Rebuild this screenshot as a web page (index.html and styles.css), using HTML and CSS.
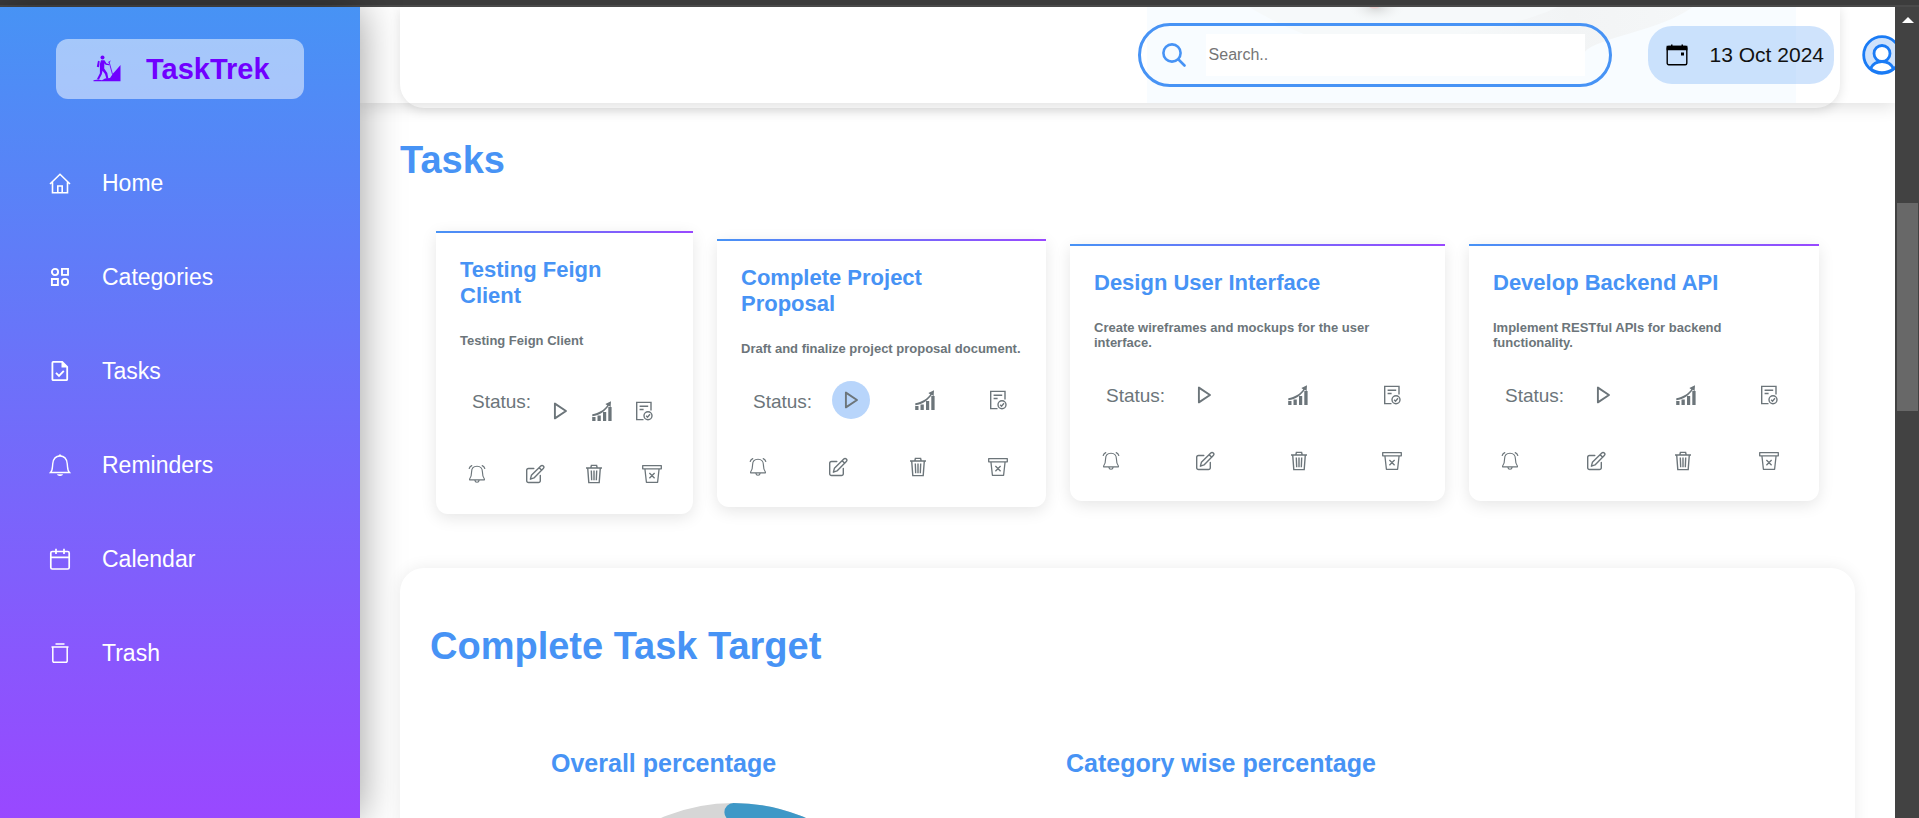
FILE: index.html
```html
<!DOCTYPE html>
<html lang="en">
<head>
<meta charset="utf-8">
<title>TaskTrek</title>
<link rel="stylesheet" href="styles.css">
</head>
<body>
<svg class="sprite" aria-hidden="true">
  <symbol id="i-play" viewBox="0 0 20 20"><path d="M4.900 2.600v14.800L16 10z" fill="none" stroke="currentColor" stroke-width="1.900" stroke-linejoin="round"/></symbol>
  <symbol id="i-chart" viewBox="0 0 20 20"><g fill="currentColor"><path d="M.2 16h3.300v4H.2zM5.500 14.500h3.300V20H5.500zM11 11h3.200v9H11zM16.300 6h3.300v14h-3.300z"/><path d="M.3 13.200C7 12.200 12 9 15.300 4.600L13.400 3 19 .3l-.4 6-1.700-1.500C13 10.300 8 14.200.3 15.300z"/></g></symbol>
  <symbol id="i-doc" viewBox="0 0 20 20"><g fill="none" stroke="currentColor" stroke-width="1.400"><path d="M9.500 18.600H2.700V1.400H17v8.200M5.600 5.300h8.600M5.600 8.500h4"/><circle cx="14" cy="14.700" r="4"/><path d="m12.200 14.800 1.300 1.400 2.500-3"/></g></symbol>
  <symbol id="i-alarm" viewBox="0 0 20 20"><g fill="none" stroke="currentColor" stroke-width="1.150" stroke-linecap="round" stroke-linejoin="round"><path d="M10 2.200c-3.600 0-5.400 2.400-5.400 5.600 0 4-.8 5.700-2 7.200v.8h14.800V15c-1.200-1.500-2-3.200-2-7.200 0-3.200-1.800-5.600-5.400-5.600zM7.800 16.200c.4 2.700 4 2.700 4.400 0M2.200 4.500c.4-1.400 1.300-2.400 2.600-2.900M17.800 4.500c-.4-1.400-1.300-2.400-2.600-2.900"/></g></symbol>
  <symbol id="i-edit" viewBox="0 0 20 20"><g fill="none" stroke="currentColor" stroke-width="1.400" stroke-linecap="round" stroke-linejoin="round"><path d="M8.800 4.500H3.500A1.800 1.800 0 0 0 1.700 6.300v10.400a1.800 1.800 0 0 0 1.800 1.800h10a1.800 1.800 0 0 0 1.800-1.800V11.500"/><path d="m5.400 15.200 1-3.900L15.800 2a1.700 1.700 0 0 1 2.500 2.500L9 13.900zM14.200 3.700l2.500 2.500"/></g></symbol>
  <symbol id="i-bin" viewBox="0 0 20 20"><g fill="none" stroke="currentColor" stroke-width="1.400"><path d="M2 4h16M6.800 4l.6-2.600h5.200l.6 2.600M3.700 4l1.100 14.600h10.400L16.300 4M7.300 6.500l.4 9.800M10 6.500v9.800M12.700 6.500l-.4 9.800"/></g></symbol>
  <symbol id="i-archive" viewBox="0 0 20 20"><g fill="none" stroke="currentColor" stroke-width="1.300" stroke-linejoin="round"><path d="M.7 1.600h18.600v3.200H.7zM2.900 4.800l1.500 13.500h11.200l1.500-13.500M7.400 9l5.200 5.200M12.600 9l-5.200 5.200"/></g></symbol>
</svg>

<div class="window-edge"></div>
<div class="shell">
  <aside class="sidebar">
    <div class="brand">
      <svg class="brand-icon" viewBox="0 0 28 28" aria-hidden="true"><g fill="#7000ff"><circle cx="9.500" cy="2.500" r="2"/><path d="M8 5.200 11.500 5.300 13.500 8.400 16.300 9 16 10.300 12.600 9.700 11.400 8.200 11.200 13.600 14.300 18 15.300 23.500 13.500 24 12 19 9.500 15.800 8.800 19.200 6 24.600 4 24 6.900 18.300 6.900 9zM5 5.800 6.700 6.200 6 12.300 3.800 11.800z"/><path d="M.5 25.200 5 24.500 9 25.200 12 23.400 17 23 20 18.600 23 15.200 27.500 10V26.200H.5z"/></g><path d="M16 6.500 19.500 19.500M15.500 7.500l2-1.500" stroke="#7000ff" stroke-width=".9" fill="none"/></svg>
      <span>TaskTrek</span>
    </div>
    <nav class="nav" aria-label="Main">
      <a class="nav-link" href="#home"><svg viewBox="0 0 22 22" aria-hidden="true"><path d="M1 12 11 2.300 21 12M3.500 10.300v10.400h15V10.300M8.800 20.500v-6.500h4.400v6.500" fill="none" stroke="#fff" stroke-width="1.600"/></svg>Home</a>
      <a class="nav-link" href="#categories"><svg viewBox="0 0 22 22" aria-hidden="true"><g fill="none" stroke="#fff" stroke-width="1.900"><circle cx="6" cy="6" r="3.100"/><path d="M13 2.900h6v6h-6zM2.900 13h6v6h-6z"/><circle cx="16" cy="16" r="3.100"/></g></svg>Categories</a>
      <a class="nav-link" href="#tasks"><svg viewBox="0 0 22 22" aria-hidden="true"><path d="M4.200 1.900h9l5 5v12.400a.8.800 0 0 1-.8.800H4.200a.8.800 0 0 1-.8-.8V2.700a.8.800 0 0 1 .8-.8z" fill="none" stroke="#fff" stroke-width="1.800"/><path d="M12.500 1.500v6h6z" fill="#fff"/><path d="m7 12.800 3 3 4.800-4.900" fill="none" stroke="#fff" stroke-width="1.900"/></svg>Tasks</a>
      <a class="nav-link" href="#reminders"><svg viewBox="0 0 22 22" aria-hidden="true"><path d="M1.500 18.500h19c-2.200-2-1.700-4.500-2.300-9C17.700 5 15 2 11 2S4.300 5 3.800 9.500c-.6 4.500-.1 7-2.300 9z" fill="none" stroke="#fff" stroke-width="1.400"/><path d="M8 20.300h6c-.8 2.300-5.200 2.300-6 0zM9.200 2h3.600L11 0z" fill="#fff"/></svg>Reminders</a>
      <a class="nav-link" href="#calendar"><svg viewBox="0 0 22 22" aria-hidden="true"><g fill="none" stroke="#fff" stroke-width="1.700"><rect x="1.800" y="3.500" width="18.400" height="17.500" rx="1.500"/><path d="M2 9.300h18M7 .8V6M15 .8V6"/></g></svg>Calendar</a>
      <a class="nav-link" href="#trash"><svg viewBox="0 0 22 22" aria-hidden="true"><path d="M2.500 5h17M6.500 2h9M3.800 5v14a1.200 1.200 0 0 0 1.200 1.200h12a1.200 1.200 0 0 0 1.200-1.200V5" fill="none" stroke="#fff" stroke-width="1.500"/></svg>Trash</a>
    </nav>
  </aside>

  <main class="main">
    <div class="top">
      <div class="banner">
        <svg class="banner-art" viewBox="0 0 648 96" preserveAspectRatio="none" aria-hidden="true">
          <defs>
            <radialGradient id="smudge"><stop offset="0" stop-color="#d4d6d6"/><stop offset="1" stop-color="#f2f4f5" stop-opacity="0"/></radialGradient>
            <linearGradient id="sweep"><stop offset="0" stop-color="#f6f9fa"/><stop offset=".5" stop-color="#f2f4f5"/><stop offset="1" stop-color="#f5f7f8"/></linearGradient>
          </defs>
          <rect width="648" height="96" fill="#f8fcff"/>
          <path d="M102 0C125 14 148 24 160 28h230c50-8 125-10 150-28z" fill="#f6f9fa"/>
          <path d="M437 45C450 30 510 25 545 0H410C390 10 350 22 300 28h137z" fill="url(#sweep)"/>
          <ellipse cx="229" cy="0" rx="28" ry="15" fill="url(#smudge)"/>
          <path d="M222 0h10c-2 2-8 2-10 0z" fill="#eacccc"/>
        </svg>
      </div>
      <header class="header">
        <label class="search">
          <svg viewBox="0 0 24 24" aria-hidden="true"><g fill="none" stroke="#4793f5" stroke-width="2.600" stroke-linecap="round"><circle cx="10" cy="10" r="8.600"/><path d="m16.500 16.500 6 6"/></g></svg>
          <input type="search" placeholder="Search.." aria-label="Search">
        </label>
        <div class="date">
          <svg viewBox="0 0 22 22" aria-hidden="true"><rect x="1.200" y="2.500" width="19.600" height="18.200" rx="1.500" fill="none" stroke="#000" stroke-width="1.400"/><path d="M.6 1.800h20.800v4.400H.6zM5 .5h1.500V3H5zM15.500.5H17V3h-1.500zM15 8.500h3v3h-3z"/></svg>
          <time datetime="2024-10-13">13 Oct 2024</time>
        </div>
        <button class="user" type="button" aria-label="Account"><svg viewBox="0 0 40 40" aria-hidden="true"><g fill="#cfe2fb" stroke="#1a7bf5" stroke-width="2.800"><circle cx="20" cy="20" r="18.300"/><path d="M8.500 33.500C11 28.500 15 26.500 20 26.500s9 2 11.500 7a18 18 0 0 1-23 0z" fill="#fff"/><circle cx="20" cy="18.500" r="8" fill="#fff"/></g></svg></button>
      </header>
    </div>

    <section class="tasks">
      <h2 class="title">Tasks</h2>
      <div class="cards">
        <article class="card card--narrow">
          <h3 class="card-title">Testing Feign Client</h3>
          <p class="card-text">Testing Feign Client</p>
          <div class="status"><span class="status-label">Status:</span>
            <div class="status-actions">
              <button class="state" type="button" aria-label="Start"><svg><use href="#i-play"/></svg></button>
              <button class="state" type="button" aria-label="In progress"><svg><use href="#i-chart"/></svg></button>
              <button class="state" type="button" aria-label="Completed"><svg><use href="#i-doc"/></svg></button>
            </div></div>
          <div class="tools">
            <button class="tool" type="button" aria-label="Remind"><svg><use href="#i-alarm"/></svg></button>
            <button class="tool" type="button" aria-label="Edit"><svg><use href="#i-edit"/></svg></button>
            <button class="tool" type="button" aria-label="Delete"><svg><use href="#i-bin"/></svg></button>
            <button class="tool" type="button" aria-label="Archive"><svg><use href="#i-archive"/></svg></button>
          </div>
        </article>
        <article class="card">
          <h3 class="card-title">Complete Project Proposal</h3>
          <p class="card-text">Draft and finalize project proposal document.</p>
          <div class="status"><span class="status-label">Status:</span>
            <div class="status-actions">
              <button class="state state--on" type="button" aria-label="Start"><svg><use href="#i-play"/></svg></button>
              <button class="state" type="button" aria-label="In progress"><svg><use href="#i-chart"/></svg></button>
              <button class="state" type="button" aria-label="Completed"><svg><use href="#i-doc"/></svg></button>
            </div></div>
          <div class="tools">
            <button class="tool" type="button" aria-label="Remind"><svg><use href="#i-alarm"/></svg></button>
            <button class="tool" type="button" aria-label="Edit"><svg><use href="#i-edit"/></svg></button>
            <button class="tool" type="button" aria-label="Delete"><svg><use href="#i-bin"/></svg></button>
            <button class="tool" type="button" aria-label="Archive"><svg><use href="#i-archive"/></svg></button>
          </div>
        </article>
        <article class="card">
          <h3 class="card-title">Design User Interface</h3>
          <p class="card-text">Create wireframes and mockups for the user interface.</p>
          <div class="status"><span class="status-label">Status:</span>
            <div class="status-actions">
              <button class="state" type="button" aria-label="Start"><svg><use href="#i-play"/></svg></button>
              <button class="state" type="button" aria-label="In progress"><svg><use href="#i-chart"/></svg></button>
              <button class="state" type="button" aria-label="Completed"><svg><use href="#i-doc"/></svg></button>
            </div></div>
          <div class="tools">
            <button class="tool" type="button" aria-label="Remind"><svg><use href="#i-alarm"/></svg></button>
            <button class="tool" type="button" aria-label="Edit"><svg><use href="#i-edit"/></svg></button>
            <button class="tool" type="button" aria-label="Delete"><svg><use href="#i-bin"/></svg></button>
            <button class="tool" type="button" aria-label="Archive"><svg><use href="#i-archive"/></svg></button>
          </div>
        </article>
        <article class="card">
          <h3 class="card-title">Develop Backend API</h3>
          <p class="card-text">Implement RESTful APIs for backend functionality.</p>
          <div class="status"><span class="status-label">Status:</span>
            <div class="status-actions">
              <button class="state" type="button" aria-label="Start"><svg><use href="#i-play"/></svg></button>
              <button class="state" type="button" aria-label="In progress"><svg><use href="#i-chart"/></svg></button>
              <button class="state" type="button" aria-label="Completed"><svg><use href="#i-doc"/></svg></button>
            </div></div>
          <div class="tools">
            <button class="tool" type="button" aria-label="Remind"><svg><use href="#i-alarm"/></svg></button>
            <button class="tool" type="button" aria-label="Edit"><svg><use href="#i-edit"/></svg></button>
            <button class="tool" type="button" aria-label="Delete"><svg><use href="#i-bin"/></svg></button>
            <button class="tool" type="button" aria-label="Archive"><svg><use href="#i-archive"/></svg></button>
          </div>
        </article>
      </div>
    </section>

    <section class="target">
      <h2 class="title">Complete Task Target</h2>
      <div class="charts">
        <div>
          <h3 class="chart-title">Overall percentage</h3>
          <svg class="donut" viewBox="0 0 100 100" aria-hidden="true"><g fill="none" stroke-width="5" stroke-linecap="round"><circle cx="50" cy="50" r="47.500" stroke="#d6d6d6"/><path d="M50 2.500a47.500 47.500 0 0 1 0 95" stroke="#3e98c7"/></g></svg>
        </div>
        <div><h3 class="chart-title">Category wise percentage</h3></div>
      </div>
    </section>
  </main>

  <div class="scrollbar" aria-hidden="true"><svg viewBox="0 0 12 6"><path d="M0 6 6 0l6 6z" fill="#fff"/></svg><div class="thumb"></div></div>
</div>
</body>
</html>
```
FILE: styles.css
```css
:root {
  --blue: #4793f5;
  --violet: #9948ff;
  --grey: #6c757a;
}

* { box-sizing: border-box; }

body {
  margin: 0;
  height: 100vh;
  display: flex;
  flex-direction: column;
  overflow: hidden;
  background: #fff;
  font-family: "Liberation Sans", Arial, sans-serif;
}

h2, h3, p { margin: 0; }
svg { display: block; flex: none; }
button { border: 0; padding: 0; background: none; color: inherit; }
.sprite { position: absolute; width: 0; height: 0; }

.window-edge {
  flex: none;
  height: 7px;
  background: #3c3c3c;
  border-bottom: 2px solid #4a4a4a;
}

.shell { flex: 1; min-height: 0; display: flex; }

/* Sidebar */
.sidebar {
  flex: none;
  width: 360px;
  background: linear-gradient(var(--blue), var(--violet));
  box-shadow: 0 0 40px rgba(0, 0, 0, .4);
}
.brand {
  display: flex;
  align-items: center;
  gap: 25px;
  height: 60px;
  margin: 32px 56px 37px;
  padding-left: 37px;
  border-radius: 12px;
  background: rgba(255, 255, 255, .5);
  color: #7000ff;
  font-size: 29px;
  font-weight: 700;
}
.brand-icon { width: 28px; height: 28px; }
.nav-link {
  display: flex;
  align-items: center;
  gap: 31px;
  height: 94px;
  padding-left: 49px;
  color: #fff;
  font-size: 23px;
  text-decoration: none;
}
.nav-link svg { width: 22px; height: 22px; }

/* Header over the banner */
.main {
  flex: 1;
  min-width: 0;
  overflow: hidden;
  position: relative;
}
.top { display: grid; margin-bottom: 30px; }
.banner, .header { grid-area: 1 / 1; }
.banner {
  height: 101px;
  margin: 0 55px 0 40px;
  padding: 0 44px 5px;
  display: flex;
  justify-content: flex-end;
  border-radius: 0 0 24px 24px;
  background: #fff;
  box-shadow: 0 2px 12px rgba(0, 0, 0, .12);
}
.banner-art { width: 48%; height: 96px; }
.header {
  position: relative;
  height: 96px;
  display: flex;
  align-items: center;
  justify-content: flex-end;
  box-shadow: 0 4px 16px rgba(0, 0, 0, .12);
}
.search {
  display: flex;
  align-items: center;
  gap: 20px;
  width: 474px;
  height: 64px;
  margin-right: 36px;
  padding: 0 24px 0 21px;
  border: 3px solid var(--blue);
  border-radius: 32px;
}
.search svg { width: 24px; height: 24px; }
.search input {
  flex: 1;
  min-width: 0;
  height: 42px;
  padding: 0 3px;
  border: 0;
  background: #fff;
  font: 16px "Liberation Sans", Arial, sans-serif;
  appearance: none;
}
.search input::placeholder { color: #757575; }
.date {
  display: flex;
  align-items: center;
  gap: 22px;
  height: 58px;
  margin-right: 28px;
  padding: 0 10px 0 18px;
  border-radius: 24px;
  background: rgba(71, 147, 245, .26);
  color: #111;
  font-size: 21px;
}
.date svg { width: 22px; height: 22px; }
.user { margin-right: -7px; }
.user svg { width: 40px; height: 40px; }

/* Tasks */
.title {
  color: var(--blue);
  font-size: 38px;
  line-height: 44px;
}
.tasks { padding: 0 40px; }
.cards {
  display: grid;
  grid-template-columns: 257fr 329fr 375fr 350fr;
  align-items: center;
  gap: 24px;
  margin: 49px 36px 54px;
}
.card {
  padding: 24px 24px 23px;
  border-top: 2px solid;
  border-image: linear-gradient(90deg, var(--blue), var(--violet)) 1;
  border-radius: 0 0 12px 12px;
  background: #fff;
  box-shadow: 0 4px 16px rgba(0, 0, 0, .1);
  color: var(--grey);
}
.card-title {
  padding-right: 8px;
  color: var(--blue);
  font-size: 22px;
  line-height: 26px;
}
.card-text {
  margin: 24px 0 18px;
  font-size: 13px;
  font-weight: 700;
  line-height: 15px;
}
.status {
  display: flex;
  align-items: center;
  gap: 20px;
  height: 56px;
  padding: 0 calc(10% - 23px) 0 12px;
}
.status-label { font-size: 19px; }
.status-actions {
  flex: 1;
  display: flex;
  justify-content: space-between;
  padding-bottom: 3px;
}
.state {
  display: grid;
  place-items: center;
  width: 38px;
  height: 38px;
  border-radius: 50%;
}
.state--on { background: #b8d5fb; }
.state svg, .tool svg { width: 20px; height: 20px; }
.tools {
  display: flex;
  justify-content: space-between;
  margin-top: 20px;
  padding-right: calc(10% - 21px);
}
.tool {
  display: grid;
  place-items: center;
  width: 34px;
  height: 34px;
}
.card--narrow .status { height: 71px; gap: 10px; padding-right: 6px; }
.card--narrow .status-actions { padding: 18px 0 0; }

/* Target panel */
.target {
  margin: 0 40px;
  padding: 56px 30px;
  border-radius: 24px;
  background: #fff;
  box-shadow: 0 0 16px rgba(0, 0, 0, .08);
}
.charts {
  display: grid;
  grid-template-columns: 365px 1fr;
  gap: 150px;
  margin-top: 80px;
  padding-left: 121px;
}
.chart-title {
  color: var(--blue);
  font-size: 25px;
  line-height: 30px;
}
.donut { width: 100%; margin-top: 25px; }

/* Scroll track */
.scrollbar {
  flex: none;
  width: 24px;
  padding: 10px 1px 0 2px;
  background: #424242;
  position: relative;
}
.scrollbar svg { width: 12px; height: 6px; margin: 0 auto; }
.thumb { height: 208px; margin-top: 180px; background: #686868; }
```
